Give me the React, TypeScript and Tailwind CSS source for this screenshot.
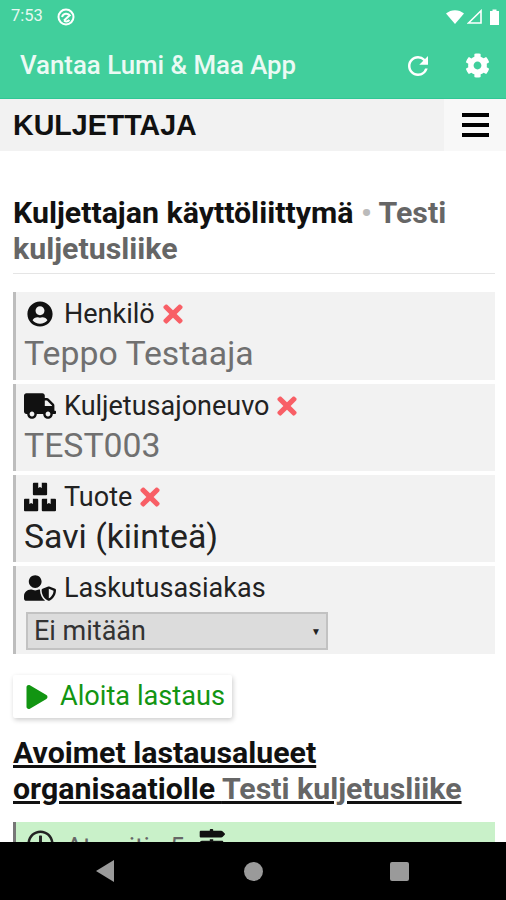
import { FaBoxes, FaCog, FaMapSigns, FaPlay, FaRegClock, FaTimes, FaTruck, FaUserCircle, FaUserShield } from "react-icons/fa";
import { MdRefresh } from "react-icons/md";
import type { ReactNode } from "react";

const Row = ({
  icon,
  label,
  removable,
  className,
  children,
}: {
  icon: ReactNode;
  label: string;
  removable?: boolean;
  className: string;
  children: ReactNode;
}) => (
  <div className={`border-l-[3px] border-[#bdbdbd] bg-[#f2f2f2] pl-[8px] ${className}`}>
    <div className="flex h-[42px] items-center pt-[2px] text-[27px] text-[#222]">
      <span className="flex w-[32px] shrink-0 items-center justify-center text-[#111]">{icon}</span>
      <span className="ml-[8px]">{label}</span>
      {removable && <FaTimes className="ml-[4px] text-[28px] text-[#f85f66]" />}
    </div>
    {children}
  </div>
);

export default function App() {
  return (
    <div className="flex h-[900px] w-[506px] flex-col overflow-hidden bg-white font-['Roboto',sans-serif]">
      <div className="h-[99px] shrink-0 border-b border-[#2fc795] bg-[#41cf9c] text-white">
        <div className="flex h-[33px] items-center justify-between pl-[11px] pr-[5px]">
          <div className="flex items-center gap-[14px]">
            <span className="text-[16.5px] text-[#e6f8f1]">7:53</span>
            <svg width="18" height="18" viewBox="0 0 18 18" fill="none" stroke="currentColor" strokeWidth="2">
              <circle cx="9" cy="9" r="7.5" />
              <path d="M5 9 C6 5 11 4.5 13.5 8 M7 12.5 L13 7 M7 12.5 C9 14 11 13.5 12.5 12" />
            </svg>
          </div>
          <div className="flex items-center gap-[3px]">
            <svg width="18" height="14" viewBox="0 0 18 14" fill="currentColor">
              <path d="M0 3.5 C5 -1 13 -1 18 3.5 L9 14 Z" />
            </svg>
            <svg width="15" height="15" viewBox="0 0 15 15" fill="none" stroke="currentColor" strokeWidth="1.6">
              <path d="M1.5 14 L14 1.8 V14 Z" />
            </svg>
            <svg width="13" height="16" viewBox="0 0 13 16" fill="currentColor" className="ml-[3px]">
              <path d="M2 2 H4.5 V0.5 H8.5 V2 H11 V16 H2 Z" />
            </svg>
          </div>
        </div>
        <div className="flex h-[65px] items-center pl-[20px] pr-[16px]">
          <span className="flex-1 text-[25.8px] font-medium text-[#ebfaf4]">Vantaa Lumi &amp; Maa App</span>
          <MdRefresh className="mr-[32px] text-[30px]" />
          <FaCog className="text-[25px]" />
        </div>
      </div>
      <div className="flex h-[52px] shrink-0 items-center justify-between bg-[#f2f2f2]">
        <span className="pl-[13px] text-[28.6px] font-bold text-[#111] font-['Liberation_Sans',sans-serif]">KULJETTAJA</span>
        <div className="flex h-full w-[62px] items-center justify-center bg-[#f8f8f8]">
          <div className="flex w-[27px] flex-col gap-[6px]">
            <div className="h-[4px] bg-black" />
            <div className="h-[4px] bg-black" />
            <div className="h-[4px] bg-black" />
          </div>
        </div>
      </div>
      <main className="min-h-0 flex-1 overflow-hidden pl-[13px] pr-[11px] pt-[44px]">
        <h1 className="border-b border-[#e5e5e5] pb-[6px] text-[30.3px] font-bold leading-[36px] text-[#111]">
          Kuljettajan käyttöliittymä <span className="text-[#bbb]">•</span>{" "}
          <span className="text-[#666]">Testi kuljetusliike</span>
        </h1>
        <div className="mt-[18px] flex flex-col gap-[4px]">
          <Row className="h-[88px]" icon={<FaUserCircle className="text-[26px]" />} label="Henkilö" removable>
            <div className="text-[33.8px] leading-[40px] text-[#707070]">Teppo Testaaja</div>
          </Row>
          <Row className="h-[87px]" icon={<FaTruck className="text-[32px]" />} label="Kuljetusajoneuvo" removable>
            <div className="text-[33.8px] leading-[40px] text-[#707070]">TEST003</div>
          </Row>
          <Row className="h-[87px]" icon={<FaBoxes className="text-[32px]" />} label="Tuote" removable>
            <div className="text-[33.8px] leading-[40px] text-[#222]">Savi (kiinteä)</div>
          </Row>
          <Row className="h-[88px]" icon={<FaUserShield className="text-[32px]" />} label="Laskutusasiakas">
            <div className="ml-[2px] mt-[4px] flex h-[38px] w-[302px] items-center justify-between border-2 border-[#c2c2c2] bg-[#dcdcdc] pl-[6px] pr-[5px] text-[27px] text-[#333]">
              <span>Ei mitään</span>
              <span className="text-[10px] text-[#222]">▼</span>
            </div>
          </Row>
        </div>
        <button className="mt-[21px] flex h-[43px] w-[219px] items-center rounded-[2px] bg-white pl-[12px] text-[27.2px] text-[#129512] shadow-[1px_2px_5px_rgba(0,0,0,0.2)]">
          <FaPlay className="mr-[11px] text-[24px]" />
          Aloita lastaus
        </button>
        <h2 className="mt-[17px] text-[30.3px] font-bold leading-[36px] text-[#111] underline">
          Avoimet lastausalueet organisaatiolle <span className="text-[#666]">Testi kuljetusliike</span>
        </h2>
        <div className="mt-[15px] flex h-[40px] items-start border-l-[3px] border-[#777] bg-[#c9f1c9] pl-[11px] pt-[8px] text-[26px] text-[#666]">
          <FaRegClock className="mr-[12px] text-[27px] text-[#222]" />
          <span className="mt-[-2px]">Atomitie 5</span>
          <FaMapSigns className="ml-[13px] mt-[-1px] text-[27px] text-[#111]" />
        </div>
      </main>
      <nav className="flex h-[58px] shrink-0 items-center bg-black text-[#9a9a9a]">
        <svg width="20" height="22" viewBox="0 0 20 22" fill="currentColor" className="ml-[96px]">
          <path d="M18 0 V22 L0 11 Z" />
        </svg>
        <div className="ml-[128px] h-[19px] w-[19px] rounded-full bg-[#9a9a9a]" />
        <div className="ml-[127px] h-[19px] w-[19px] rounded-[2px] bg-[#9a9a9a]" />
      </nav>
    </div>
  );
}
